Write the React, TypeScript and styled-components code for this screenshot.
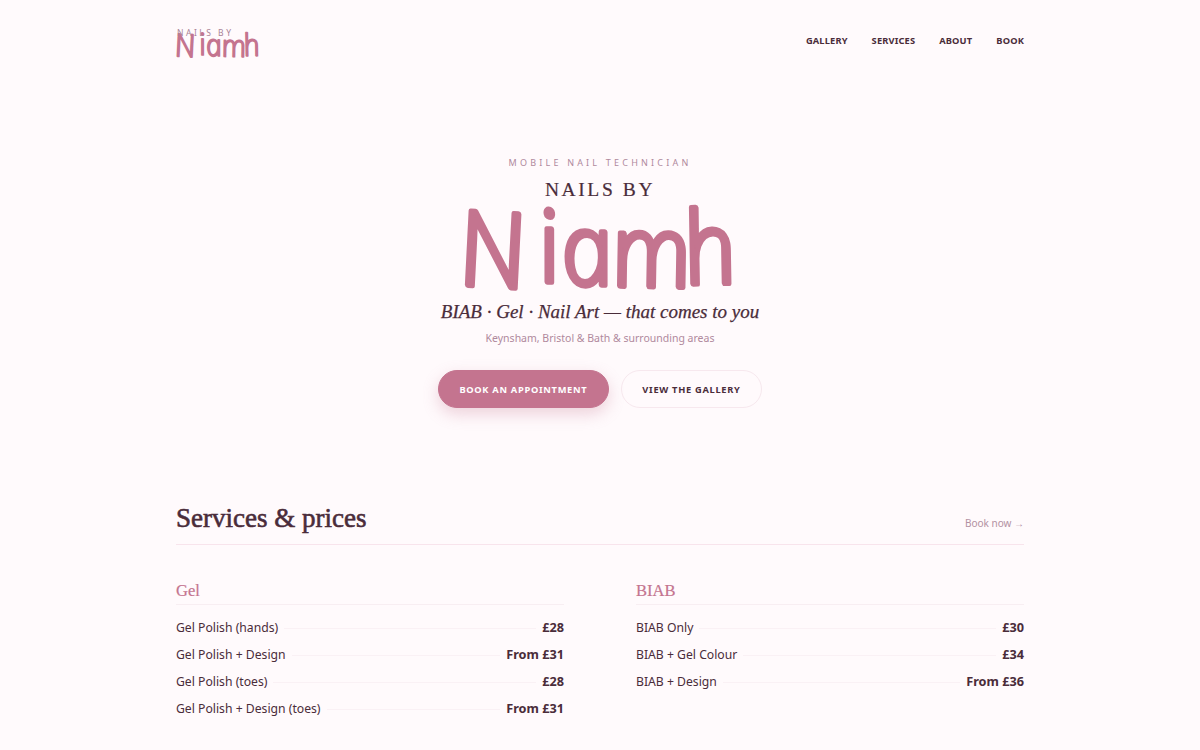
import React from 'react'
import styled, { createGlobalStyle } from 'styled-components'

const GlobalStyle = createGlobalStyle`
  html, body {
    margin: 0;
    padding: 0;
    background: #fffafc;
    color: #4a2c3a;
    font-family: "Noto Sans", "Open Sans", sans-serif;
  }
  * { box-sizing: border-box; }
`

const SERIF = '"Liberation Serif", "DejaVu Serif", serif'

const Page = styled.div`
  width: 1200px;
  height: 750px;
  overflow: hidden;
`

const Header = styled.header`
  width: 848px;
  height: 82px;
  margin: 0 auto;
  display: flex;
  align-items: center;
  justify-content: space-between;
`

const Logo = styled.a`
  display: flex;
  flex-direction: column;
  margin-top: 6px;
`

const LogoSmall = styled.span`
  font-size: 8.5px;
  line-height: 8px;
  letter-spacing: 2.5px;
  color: #a98296;
  margin: 0 0 -5px 1px;
  position: relative;
`

const WordSvg = styled.svg`
  display: block;
  overflow: visible;
`

const WordText = styled.text`
  font-family: "Open Sans", sans-serif;
  font-style: italic;
  font-weight: 300;
  font-size: 100px;
  fill: #c4748f;
  stroke: #c4748f;
  stroke-width: 5.5px;
  stroke-linejoin: round;
  stroke-linecap: round;
`

const WordCap = styled.tspan`
  font-size: 105px;
`

// wordmark: real text, hand-drawn feel from the rounded stroke and loose spacing
const Wordmark = ({ width, height }: { width: number; height: number }) => (
  <WordSvg width={width} height={height} viewBox="0 0 274 88" role="img" aria-label="Niamh">
    <WordText transform="translate(0 79) scale(0.92 1) skewX(12)">
      <WordCap x="0" y="0" rotate="3">N</WordCap>
      <tspan x="89 113 167 247" y="-3 0 1 -1" rotate="0 0 1 -1">iamh</tspan>
    </WordText>
  </WordSvg>
)

const Nav = styled.nav`
  display: flex;
  gap: 24px;
`

const NavLink = styled.a`
  font-size: 9.3px;
  font-weight: 700;
  letter-spacing: 0.15px;
  text-transform: uppercase;
  color: #4a2c3a;
  margin-top: -1px;
`

const Hero = styled.section`
  display: flex;
  flex-direction: column;
  align-items: center;
  padding-top: 73px;
`

const Kicker = styled.div`
  font-size: 9px;
  line-height: 16px;
  letter-spacing: 3.2px;
  text-transform: uppercase;
  color: #b0899d;
`

const HeroSmall = styled.div`
  font-family: ${SERIF};
  font-size: 19.5px;
  line-height: 24px;
  letter-spacing: 2.6px;
  margin: 7px 0 4px;
  color: #4a2c3a;
  -webkit-text-stroke: 0.2px #4a2c3a;
`

const Tagline = styled.p`
  font-family: ${SERIF};
  font-style: italic;
  font-size: 19px;
  line-height: 24px;
  margin: 6px 0 0;
  color: #4a2c3a;
  -webkit-text-stroke: 0.25px #4a2c3a;
`

const Area = styled.p`
  font-size: 10.5px;
  line-height: 16px;
  margin: 6px 0 0;
  color: #b0899d;
`

const Buttons = styled.div`
  display: flex;
  gap: 12px;
  margin-top: 24px;
`

const Button = styled.a<{ $primary?: boolean }>`
  height: 38px;
  padding: 0 20.5px;
  border-radius: 19px;
  display: flex;
  align-items: center;
  font-size: 9.3px;
  font-weight: 700;
  letter-spacing: 0.7px;
  text-transform: uppercase;
  color: ${p => (p.$primary ? '#fff' : '#4a2c3a')};
  background: ${p => (p.$primary ? '#c4748f' : 'transparent')};
  border: 1px solid ${p => (p.$primary ? '#c4748f' : '#f7e8ee')};
  box-shadow: ${p => (p.$primary ? '0 6px 16px rgba(196, 116, 143, 0.3)' : 'none')};
`

const Services = styled.section`
  width: 848px;
  margin: 91px auto 0;
`

const SectionHead = styled.div`
  display: flex;
  justify-content: space-between;
  align-items: flex-end;
  height: 46px;
  padding-bottom: 10px;
  border-bottom: 1px solid #f8e4ec;
`

const SectionTitle = styled.h2`
  font-family: ${SERIF};
  font-size: 27px;
  font-weight: 400;
  line-height: 32px;
  margin: 0;
  color: #4a2c3a;
  -webkit-text-stroke: 0.6px #4a2c3a;
`

const BookNow = styled.a`
  font-size: 10px;
  line-height: 16px;
  margin-bottom: 3px;
  color: #b391a2;
`

const Columns = styled.div`
  display: grid;
  grid-template-columns: 388px 388px;
  gap: 72px;
  margin-top: 34px;
`

const CategoryTitle = styled.h3`
  font-family: ${SERIF};
  font-size: 16.5px;
  font-weight: 400;
  line-height: 24px;
  margin: 0 0 9px;
  padding-bottom: 1px;
  color: #c4748f;
  border-bottom: 1px solid #f8eef2;
  -webkit-text-stroke: 0.2px #c4748f;
`

const Row = styled.div`
  display: flex;
  align-items: center;
  height: 27px;
`

const RowName = styled.span`
  font-size: 12.2px;
  color: #4a2c3a;
`

const Leader = styled.span`
  flex: 1;
  height: 1px;
  margin: 2px 6px 0;
  background: #faf1f5;
`

const Price = styled.span`
  font-size: 12.7px;
  font-weight: 700;
  margin-top: -1px;
  color: #4a2c3a;
`

const gel: [string, string][] = [
  ['Gel Polish (hands)', '£28'],
  ['Gel Polish + Design', 'From £31'],
  ['Gel Polish (toes)', '£28'],
  ['Gel Polish + Design (toes)', 'From £31'],
]

const biab: [string, string][] = [
  ['BIAB Only', '£30'],
  ['BIAB + Gel Colour', '£34'],
  ['BIAB + Design', 'From £36'],
]

const Category = ({ title, items }: { title: string; items: [string, string][] }) => (
  <div>
    <CategoryTitle>{title}</CategoryTitle>
    {items.map(([name, price]) => (
      <Row key={name}>
        <RowName>{name}</RowName>
        <Leader />
        <Price>{price}</Price>
      </Row>
    ))}
  </div>
)

export default function App() {
  return (
    <Page>
      <GlobalStyle />
      <Header>
        <Logo>
          <LogoSmall>NAILS BY</LogoSmall>
          <Wordmark width={84} height={27} />
        </Logo>
        <Nav>
          <NavLink>Gallery</NavLink>
          <NavLink>Services</NavLink>
          <NavLink>About</NavLink>
          <NavLink>Book</NavLink>
        </Nav>
      </Header>
      <Hero>
        <Kicker>Mobile Nail Technician</Kicker>
        <HeroSmall>NAILS BY</HeroSmall>
        <Wordmark width={274} height={88} />
        <Tagline>BIAB · Gel · Nail Art — that comes to you</Tagline>
        <Area>Keynsham, Bristol &amp; Bath &amp; surrounding areas</Area>
        <Buttons>
          <Button $primary>Book an appointment</Button>
          <Button>View the gallery</Button>
        </Buttons>
      </Hero>
      <Services>
        <SectionHead>
          <SectionTitle>Services &amp; prices</SectionTitle>
          <BookNow>Book now →</BookNow>
        </SectionHead>
        <Columns>
          <Category title="Gel" items={gel} />
          <Category title="BIAB" items={biab} />
        </Columns>
      </Services>
    </Page>
  )
}
